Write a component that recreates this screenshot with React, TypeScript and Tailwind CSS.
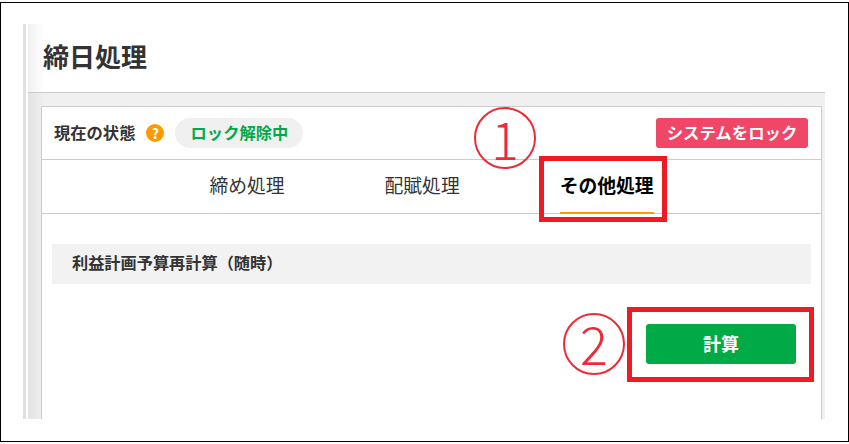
import React from 'react';

const jp = 'font-["Noto_Sans_CJK_JP","Noto_Sans",sans-serif]';

const App: React.FC = () => {
  return (
    <div className={`relative h-[444px] w-[849px] overflow-hidden bg-white ${jp} text-[#333]`}>
      <div className="mt-[2px] flex h-[440px] w-[849px] border border-black pt-[21px] pl-[22px]">
        <div className="flex h-[395px] w-[802px] flex-col border-l-[3px] border-[#e0e0e0] pl-[2px]">
          <header className="flex h-[69px] shrink-0 items-center border-b border-[#ccc] bg-gradient-to-r from-[#f0f0f0] to-white to-[2%] pb-[5px] pl-[15px]">
            <h1 className="text-[26px] leading-none font-bold">締日処理</h1>
          </header>
          <div className="flex min-h-0 flex-1 bg-gradient-to-r from-[#e2e2e2] to-[#f0f0f0] to-[2%] pt-[13px] pr-[3px] pl-[13px]">
            <section className="flex flex-1 flex-col border-x border-t border-[#ccc] bg-white">
              <div className="flex h-[53px] shrink-0 items-center justify-between border-b border-[#ccc] pr-[13px] pl-[12px]">
                <div className="flex items-center">
                  <span className="pb-[2px] text-[16.3px] leading-none font-bold">現在の状態</span>
                  <span className="ml-[11px] flex h-[18px] w-[18px] items-center justify-center rounded-full bg-[#ff9a00] text-[14px] leading-none font-bold text-white">?</span>
                  <span className="ml-[11px] flex h-[30px] w-[128px] items-center justify-center rounded-full bg-[#f0f0f0] pb-[2px] text-[16.3px] leading-none font-bold text-[#00a94a]">ロック解除中</span>
                </div>
                <button className="flex h-[30px] w-[152px] items-center justify-center rounded-[3px] bg-[#f04668] pb-[2px] text-[16.4px] leading-none font-bold text-white">システムをロック</button>
              </div>
              <nav className="flex h-[54px] shrink-0 justify-center gap-[100px] border-b border-[#ccc] text-[18.8px] leading-none">
                <span className="flex items-center pb-[2px]">締め処理</span>
                <span className="flex items-center pb-[2px]">配賦処理</span>
                <span className="-mb-px flex items-center border-b-2 border-[#ff9a00] pb-[2px] font-bold text-black">その他処理</span>
              </nav>
              <div className="px-[10px] pt-[30px]">
                <div className="flex h-[40px] items-center bg-[#f2f2f2] pb-[3px] pl-[20px] text-[16.2px] leading-none font-bold">利益計画予算再計算（随時）</div>
                <div className="mt-[40px] flex justify-end pr-[15px]">
                  <button className="flex h-[40px] w-[150px] items-center justify-center rounded-[3px] bg-[#00aa47] pb-[2px] text-[18px] leading-none font-bold text-white">計算</button>
                </div>
              </div>
            </section>
          </div>
        </div>
      </div>

      {/* 注釈 */}
      <div className="absolute top-[156px] left-[539px] h-[66px] w-[128px] border-[5px] border-[#ed1c24]" />
      <div className="absolute top-[307px] left-[627px] h-[75px] w-[187px] border-[5px] border-[#ed1c24]" />
      <div className="absolute top-[107px] left-[474px] flex h-[62px] w-[62px] items-center justify-center rounded-full border-2 border-[#ed2a35] pb-[1px] text-[52px] leading-none font-light text-[#ed2a35]">1</div>
      <div className="absolute top-[313px] left-[563px] flex h-[62px] w-[62px] items-center justify-center rounded-full border-2 border-[#ed2a35] pb-[2px] text-[52px] leading-none font-light text-[#ed2a35]">2</div>
    </div>
  );
};

export default App;
